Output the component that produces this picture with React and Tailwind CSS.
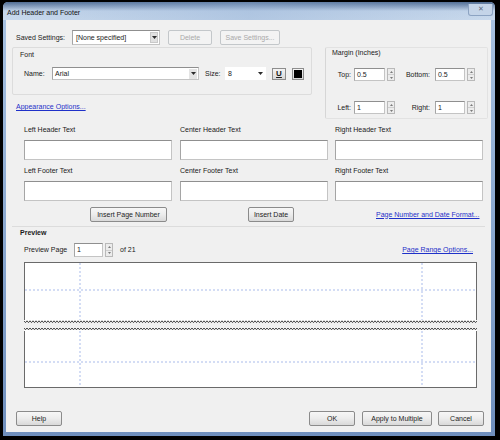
import React from 'react';

// tiny caret used by the combo boxes
function Caret({ className = '' }) {
  return (
    <svg width="5" height="3" viewBox="0 0 5 3" className={className} aria-hidden>
      <polygon points="0,0 5,0 2.5,3" fill="#2b2b2b" />
    </svg>
  );
}

function Spinner() {
  return (
    <div className="w-[8px] h-full flex flex-col border border-[#b9b9b9] bg-[#ececec]">
      <div className="flex-1 flex items-center justify-center border-b border-[#cfcfcf]">
        <svg width="3" height="2" viewBox="0 0 3 2" aria-hidden>
          <polygon points="0,2 3,2 1.5,0" fill="#7a7a7a" />
        </svg>
      </div>
      <div className="flex-1 flex items-center justify-center">
        <svg width="3" height="2" viewBox="0 0 3 2" aria-hidden>
          <polygon points="0,0 3,0 1.5,2" fill="#7a7a7a" />
        </svg>
      </div>
    </div>
  );
}

function Field({ className = '', children }) {
  return (
    <div
      className={`bg-white border border-[#c4c4c4] border-t-[#8f8f8f] border-l-[#a5a5a5] flex items-center pl-[2px] ${className}`}
    >
      {children}
    </div>
  );
}

function Btn({ className = '', disabled, children }) {
  return (
    <div
      className={`h-[15px] flex items-center justify-center rounded-[2px] border ${
        disabled
          ? 'border-[#c3c7ca] bg-[#f3f3f3] text-[#a9a9a9]'
          : 'border-[#8b8b8b] bg-gradient-to-b from-[#f7f7f7] via-[#ececec] to-[#d9d9d9] text-[#1d1d1d]'
      } ${className}`}
    >
      {children}
    </div>
  );
}

function Link({ children }) {
  return <span className="text-[#1f31c9] underline">{children}</span>;
}

function Zigzag({ width }) {
  const pts = (y0) => {
    const out = [];
    for (let x = 0, i = 0; x <= width; x += 1.5, i++) out.push(`${x},${i % 2 ? y0 + 1.8 : y0}`);
    return out.join(' ');
  };
  const top = pts(0.8);
  const bottom = pts(8);
  return (
    <svg width={width} height="11" viewBox={`0 0 ${width} 11`} className="block" aria-hidden>
      <rect x="0" y="0" width={width} height="11" fill="#f0f0f0" />
      <polygon points={`0,0 ${top} ${width},0`} fill="#ffffff" />
      <polyline points={top} fill="none" stroke="#2f2f2f" strokeWidth="0.9" />
      <polygon points={`0,11 ${bottom} ${width},11`} fill="#ffffff" />
      <polyline points={bottom} fill="none" stroke="#2f2f2f" strokeWidth="0.9" />
    </svg>
  );
}

function Guides({ y }) {
  return (
    <svg width="453" height="60" className="absolute left-0 top-0" aria-hidden>
      <line x1="55" y1="0" x2="55" y2="60" stroke="#a9bbea" strokeDasharray="2 2" />
      <line x1="397" y1="0" x2="397" y2="60" stroke="#a9bbea" strokeDasharray="2 2" />
      <line x1="0" y1={y} x2="453" y2={y} stroke="#a9bbea" strokeDasharray="2 2" />
    </svg>
  );
}

export default function App() {
  return (
    <div className="w-[500px] h-[440px] bg-black overflow-hidden font-['Liberation_Sans',Arial,sans-serif] text-[7px] leading-[8px] text-[#1a1a1a]">
      <div className="ml-[3px] mt-[2px] w-[492px] h-[434px] flex flex-col rounded-t-[5px] bg-gradient-to-b from-[#a9c3e2] to-[#6f8fbd]">
        {/* title bar */}
        <div className="h-[18px] rounded-t-[5px] bg-gradient-to-b from-[#4f6b92] via-[#c3d5ea] to-[#c9d9ec]">
          <div className="h-full flex items-center pl-[4px] bg-gradient-to-r from-transparent via-[#8eacd3]/40 to-transparent">
            <span className="mt-[3px] text-[#111]">Add Header and Footer</span>
            <div className="ml-auto mr-[2px] mb-[3px] w-[25px] h-[12px] rounded-b-[3px] border border-t-0 border-[#8ca3c2] bg-[#c4d4e8] flex items-center justify-center text-[7px] text-[#5a6a80]">
              ✕
            </div>
          </div>
        </div>

        {/* client area */}
        <div className="ml-[3px] w-[485px] h-[412px] bg-[#f0f0f0] flex flex-col">
          {/* saved settings */}
          <div className="mt-[10px] h-[15px] flex items-center pl-[10px]">
            <span className="w-[56px]">Saved Settings:</span>
            <Field className="w-[88px] h-full pl-[3px]">
              <span>[None specified]</span>
              <div className="ml-auto w-[8px] h-[11px] mr-[1px] bg-[#e1e1e1] border border-[#c9c9c9] flex items-center justify-center">
                <Caret />
              </div>
            </Field>
            <Btn disabled className="ml-[8px] w-[44px]">Delete</Btn>
            <Btn disabled className="ml-[8px] w-[60px]">Save Settings...</Btn>
          </div>

          {/* font + margin */}
          <div className="mt-[2px] h-[73px] flex">
            <div className="w-[306px] flex flex-col">
              <div className="ml-[6px] w-[300px] h-[48px] border border-[#dcdcdc] rounded-[2px] flex flex-col">
                <span className="mt-[3px] ml-[7px]">Font</span>
                <div className="mt-[8px] h-[13px] flex items-center pl-[11px]">
                  <span className="w-[28px]">Name:</span>
                  <Field className="w-[147px] h-full">
                    <span>Arial</span>
                    <div className="ml-auto w-[8px] h-[10px] mr-[1px] bg-[#e4e4e4] flex items-center justify-center">
                      <Caret />
                    </div>
                  </Field>
                  <span className="ml-[6px] w-[20px]">Size:</span>
                  <div className="w-[41px] h-full bg-white flex items-center pl-[3px]">
                    <span>8</span>
                    <Caret className="ml-auto mr-[3px]" />
                  </div>
                  <div className="ml-[6px] w-[14px] h-[12px] border border-[#8d8d8d] bg-gradient-to-b from-[#f4f4f4] to-[#d8d8d8] flex items-center justify-center font-bold underline text-[8px]">
                    U
                  </div>
                  <div className="ml-[6px] w-[12px] h-[12px] border border-[#8d8d8d] bg-gradient-to-b from-[#f4f4f4] to-[#d8d8d8] flex items-center justify-center">
                    <div className="w-[8px] h-[8px] bg-black" />
                  </div>
                </div>
              </div>
              <div className="mt-[8px] pl-[10px]">
                <Link>Appearance Options...</Link>
              </div>
            </div>

            <div className="ml-[13px] w-[163px] h-[72px] border border-[#e2e2e2] border-l-[#d6d6d6] rounded-[2px] flex flex-col pl-[3px]">
              <span className="mt-[1px] pl-[3px]">Margin (Inches)</span>
              <div className="mt-[11px] h-[13px] flex items-center">
                <span className="w-[22px] text-right">Top:</span>
                <Field className="ml-[3px] w-[31px] h-full">
                  <span>0.5</span>
                </Field>
                <div className="ml-[2px] h-full"><Spinner /></div>
                <span className="w-[35px] text-right">Bottom:</span>
                <Field className="ml-[5px] w-[30px] h-full">
                  <span>0.5</span>
                </Field>
                <div className="ml-[2px] h-full"><Spinner /></div>
              </div>
              <div className="mt-[20px] h-[13px] flex items-center">
                <span className="w-[22px] text-right">Left:</span>
                <Field className="ml-[3px] w-[31px] h-full">
                  <span>1</span>
                </Field>
                <div className="ml-[2px] h-full"><Spinner /></div>
                <span className="w-[35px] text-right">Right:</span>
                <Field className="ml-[5px] w-[30px] h-full">
                  <span>1</span>
                </Field>
                <div className="ml-[2px] h-full"><Spinner /></div>
              </div>
            </div>
          </div>

          {/* header / footer text */}
          <div className="mt-[6px] flex pl-[18px]">
            <span className="w-[148px]">Left Header Text</span>
            <span className="ml-[8px] w-[148px]">Center Header Text</span>
            <span className="ml-[7px] w-[148px]">Right Header Text</span>
          </div>
          <div className="mt-[6px] h-[20px] flex pl-[18px]">
            <Field className="w-[148px] h-full" />
            <Field className="ml-[8px] w-[148px] h-full" />
            <Field className="ml-[7px] w-[148px] h-full" />
          </div>
          <div className="mt-[7px] flex pl-[18px]">
            <span className="w-[148px]">Left Footer Text</span>
            <span className="ml-[8px] w-[148px]">Center Footer Text</span>
            <span className="ml-[7px] w-[148px]">Right Footer Text</span>
          </div>
          <div className="mt-[6px] h-[20px] flex pl-[18px]">
            <Field className="w-[148px] h-full" />
            <Field className="ml-[8px] w-[148px] h-full" />
            <Field className="ml-[7px] w-[148px] h-full" />
          </div>

          <div className="mt-[6px] h-[15px] flex items-center">
            <Btn className="ml-[84px] w-[77px]">Insert Page Number</Btn>
            <Btn className="ml-[81px] w-[46px]">Insert Date</Btn>
            <span className="ml-[82px]">
              <Link>Page Number and Date Format...</Link>
            </span>
          </div>

          {/* preview */}
          <div className="mt-[4px] mx-[6px] border-t border-[#dcdcdc] flex flex-col">
            <span className="mt-[2px] ml-[8px] font-bold">Preview</span>
            <div className="mt-[6px] h-[14px] flex items-center pl-[12px]">
              <span className="w-[50px]">Preview Page</span>
              <Field className="w-[29px] h-full">
                <span>1</span>
              </Field>
              <div className="ml-[2px] h-full"><Spinner /></div>
              <span className="ml-[7px]">of 21</span>
              <span className="ml-auto mr-[12px]">
                <Link>Page Range Options...</Link>
              </span>
            </div>
            <div className="mt-[5px] ml-[12px] w-[453px] flex flex-col">
              <div className="relative h-[58px] bg-white border border-b-0 border-[#6a6a6a] overflow-hidden">
                <Guides y={27} />
              </div>
              <Zigzag width={453} />
              <div className="relative h-[57px] bg-white border border-t-0 border-[#6a6a6a] overflow-hidden">
                <Guides y={31} />
              </div>
            </div>
          </div>

          {/* footer buttons */}
          <div className="mt-[23px] h-[15px] flex items-center">
            <Btn className="ml-[10px] w-[46px]">Help</Btn>
            <Btn className="ml-auto w-[46px]">OK</Btn>
            <Btn className="ml-[7px] w-[70px]">Apply to Multiple</Btn>
            <Btn className="ml-[6px] mr-[7px] w-[46px]">Cancel</Btn>
          </div>
        </div>
      </div>
    </div>
  );
}
